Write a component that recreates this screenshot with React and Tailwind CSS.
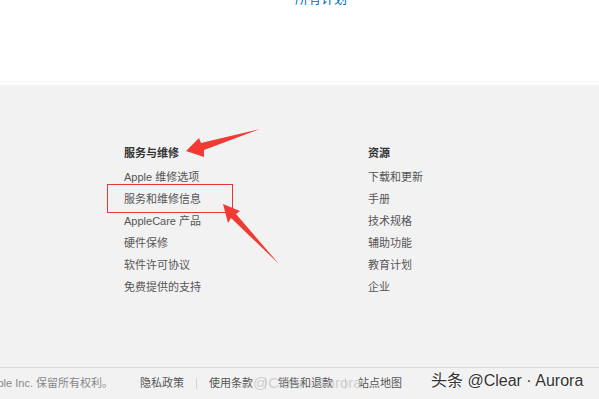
import React from 'react';

const cjk = { fontFamily: '"Liberation Sans", "Noto Sans CJK SC", sans-serif' };

const columns = [
  { title: '服务与维修', items: ['Apple 维修选项', '服务和维修信息', 'AppleCare 产品', '硬件保修', '软件许可协议', '免费提供的支持'] },
  { title: '资源', items: ['下载和更新', '手册', '技术规格', '辅助功能', '教育计划', '企业'] },
];

const links = ['隐私政策', '使用条款', '销售和退款', '站点地图'];

const App = () => {
  return (
    <div className="relative w-[599px] h-[399px] overflow-hidden bg-white flex flex-col" style={cjk}>
      {/* Top white area */}
      <div className="h-[81px] shrink-0">
        <p className="-mt-[9px] pl-[295px] text-[13px] leading-[16px] text-[#0070c9]">所有计划</p>
      </div>
      <div className="h-px shrink-0 bg-[#f6f6f6]" />
      <div className="h-[3px] shrink-0" />

      {/* Footer directory */}
      <div className="flex-1 bg-[#f2f2f2] flex flex-col">
        <div className="flex pt-[57px] pl-[124px] gap-[40px]">
          {columns.map((col) => (
            <div key={col.title} className="w-[204px]">
              <h3 className="text-[11px] leading-[22px] font-bold text-[#333]">{col.title}</h3>
              <ul className="mt-[2px]">
                {col.items.map((item) => (
                  <li key={item} className="text-[11px] leading-[22px] text-[#555]">{item}</li>
                ))}
              </ul>
            </div>
          ))}
        </div>

        <div className="mt-auto border-t border-[#d9d9d9] h-[32px] flex items-center text-[11px] text-[#888]">
          <div className="w-[113px] overflow-hidden flex justify-end whitespace-nowrap">
            <span>Copyright © 2020 Apple Inc. 保留所有权利。</span>
          </div>
          <div className="flex items-center pl-[27px]">
            {links.map((l, i) => (
              <React.Fragment key={l}>
                {i > 0 && <span className="w-px h-[11px] bg-[#d2d2d2] mx-[12px]" />}
                <span className="text-[#555] whitespace-nowrap">{l}</span>
              </React.Fragment>
            ))}
          </div>
        </div>
      </div>

      {/* Highlight box */}
      <div className="absolute left-[107px] top-[184px] w-[126px] h-[29px] border border-[#e53935]" />

      {/* Arrows */}
      <svg className="absolute left-0 top-0 pointer-events-none" width="599" height="399">
        <polygon points="186,151 199,138 201,143 260,129 204,150 204,157" fill="#f03b35" />
        <polygon points="223,204 240,211 236,214 279,264 231,218 228,223" fill="#f03b35" />
      </svg>

      {/* Watermarks */}
      <span className="absolute left-[253px] top-[374px] text-[15px] leading-[18px] text-[#bbb] opacity-60 whitespace-nowrap">
        @Clear · Aurora
      </span>
      <span
        className="absolute left-[431px] top-[371px] text-[16px] leading-[20px] text-[#333] whitespace-nowrap"
        style={{ textShadow: '0 0 2px #fff, 0 0 2px #fff' }}
      >
        头条 @Clear · Aurora
      </span>
    </div>
  );
};

export default App;
